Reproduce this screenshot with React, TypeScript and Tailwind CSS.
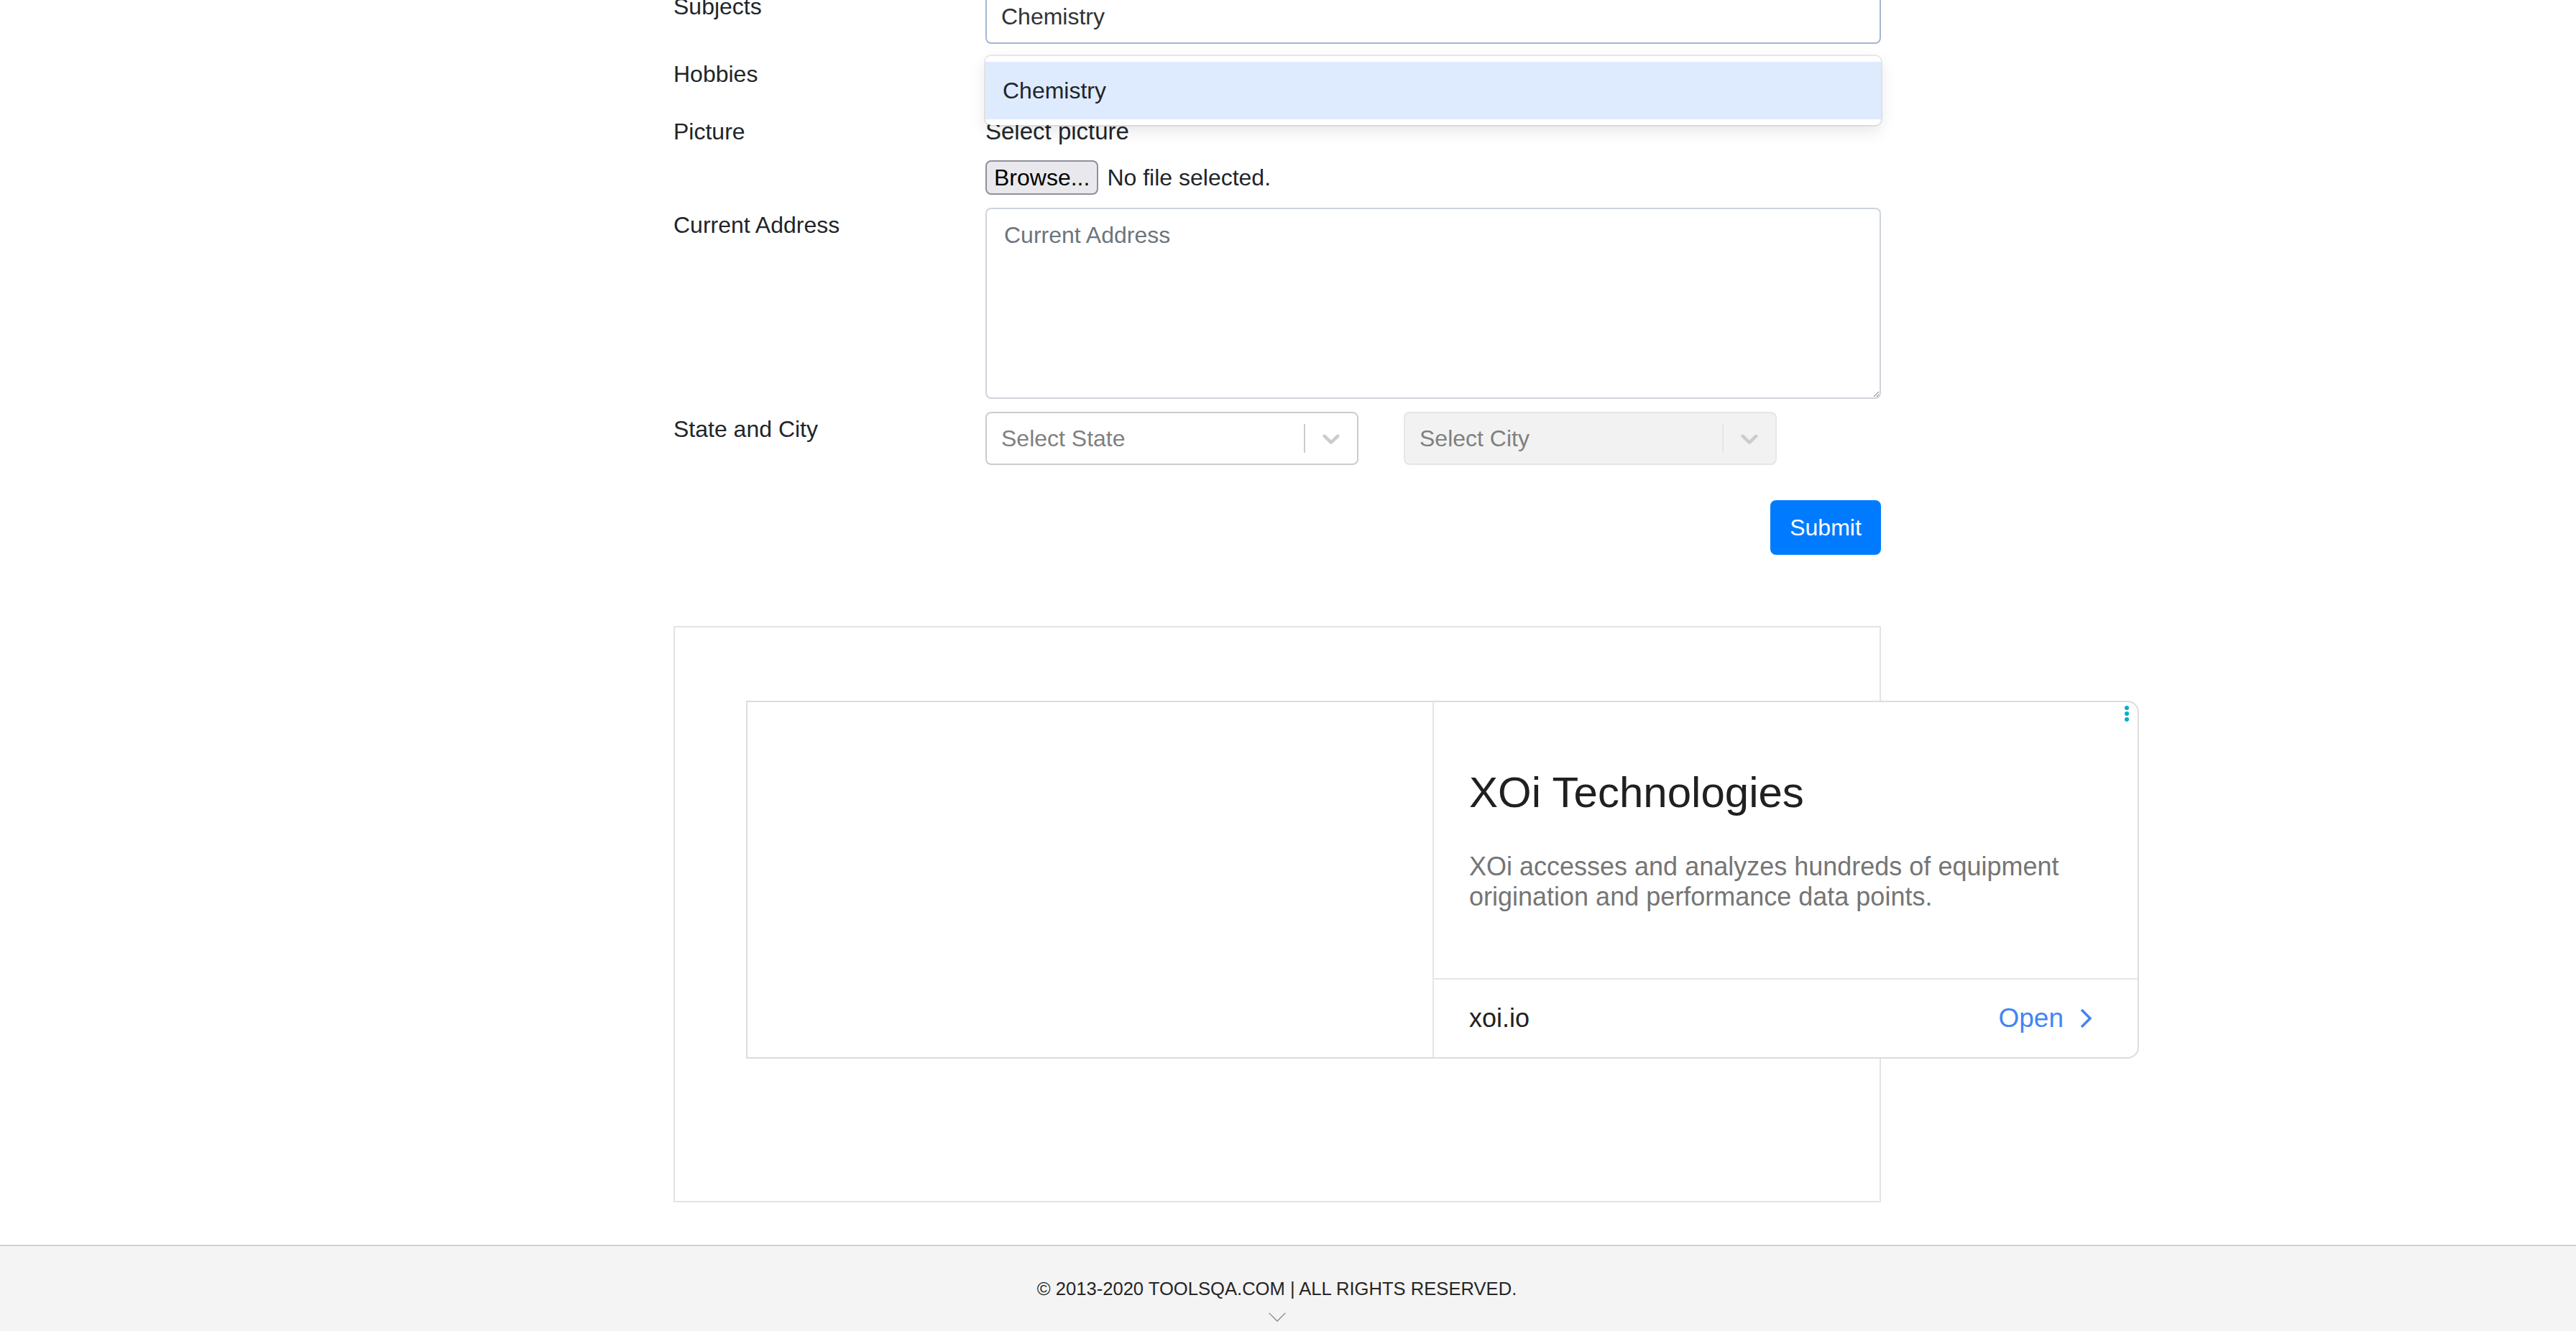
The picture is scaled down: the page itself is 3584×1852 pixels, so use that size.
import React from 'react';

const SELECT_CHEVRON =
  'M4.516 7.548c0.436-0.446 1.043-0.481 1.576 0l3.908 3.747 3.908-3.747c0.533-0.481 1.141-0.446 1.574 0 0.436 0.445 0.408 1.197 0 1.615-0.406 0.418-4.695 4.502-4.695 4.502-0.217 0.223-0.502 0.335-0.787 0.335s-0.57-0.112-0.789-0.335c0 0-4.287-4.084-4.695-4.502s-0.436-1.17 0-1.615z';

const Chevron = ({ className }: { className?: string }) => (
  <svg viewBox="0 0 20 20" className={className} fill="currentColor" aria-hidden="true">
    <path d={SELECT_CHEVRON} />
  </svg>
);

function SelectBox({ placeholder, disabled }: { placeholder: string; disabled?: boolean }) {
  return (
    <div
      className={`flex h-[74px] w-[519px] items-center rounded-[8px] border-2 ${
        disabled ? 'border-[#e6e6e6] bg-[#f2f2f2]' : 'border-[#cccccc] bg-white'
      }`}
    >
      <div className="flex-1 pl-[20px] text-[32px] text-[#808080]">{placeholder}</div>
      <span className={`h-[40px] w-[2px] ${disabled ? 'bg-[#e6e6e6]' : 'bg-[#cccccc]'}`} />
      <div className="px-[16px] text-[#cccccc]">
        <Chevron className="h-[40px] w-[40px]" />
      </div>
    </div>
  );
}

function Label({ children }: { children: React.ReactNode }) {
  return <div className="w-[434px] shrink-0 text-[32px] leading-[48px] text-[#212529]">{children}</div>;
}

export default function App() {
  return (
    <div className="min-h-screen overflow-hidden bg-white font-['Liberation_Sans',Arial,sans-serif] text-[#212529]">
      <div className="ml-[937px] w-[1680px] -mt-[15px]">
        {/* Subjects */}
        <div className="flex">
          <Label>Subjects</Label>
          <div className="relative h-[76px] w-[1246px] rounded-[8px] border-2 border-[#a3b7d3] bg-white">
            <div className="flex h-full items-center pl-[20px] text-[32px] text-[#333333]">Chemistry</div>
            <div className="absolute left-[-2px] right-[-2px] top-[91px] z-10 rounded-[8px] bg-white py-[8px] shadow-[0_0_0_2px_rgba(0,0,0,0.08),0_8px_22px_rgba(0,0,0,0.1)]">
              <div className="flex h-[80px] items-center bg-[#deebff] pl-[24px] text-[32px] text-[#212529]">
                Chemistry
              </div>
            </div>
          </div>
        </div>

        {/* Hobbies (checkboxes hidden under the open menu) */}
        <div className="mt-[18px] flex">
          <Label>Hobbies</Label>
          <div className="h-[48px] w-[1246px]" />
        </div>

        {/* Picture */}
        <div className="mt-[32px] flex">
          <Label>Picture</Label>
          <div className="w-[1246px] text-[32px]">
            <div className="leading-[48px] text-[33px]">Select picture</div>
            <div className="mt-[16px] flex h-[48px] items-center gap-[12px]">
              <button className="flex h-[48px] items-center rounded-[8px] border-2 border-[#8f8f9d] bg-[#e9e9ed] px-[10px] text-[32px] text-black">
                Browse...
              </button>
              <span>No file selected.</span>
            </div>
          </div>
        </div>

        {/* Current Address */}
        <div className="mt-[18px] flex">
          <Label>Current Address</Label>
          <textarea
            placeholder="Current Address"
            className="h-[266px] w-[1246px] rounded-[8px] border-2 border-[#ced4da] px-[24px] py-[12px] text-[32px] leading-[48px] text-[#495057] outline-none placeholder:text-[#6c757d]"
          />
        </div>

        {/* State and City */}
        <div className="mt-[18px] flex">
          <Label>State and City</Label>
          <div className="flex w-[1246px] gap-[63px]">
            <SelectBox placeholder="Select State" />
            <SelectBox placeholder="Select City" disabled />
          </div>
        </div>

        {/* Submit */}
        <div className="mt-[49px] flex justify-end">
          <button className="h-[76px] w-[154px] rounded-[8px] bg-[#007bff] text-[32px] text-white">Submit</button>
        </div>

        {/* Ad slot */}
        <div className="mt-[99px] h-[802px] w-[1680px] border-2 border-[#e3e3e3] pl-[99px] pt-[102px]">
          <div className="relative flex h-[498px] w-[1938px] rounded-r-[16px] border-2 border-[#dcdcdc] bg-white">
            <div className="w-[955px] shrink-0 border-r-2 border-[#e6e6e6]" />
            <div className="flex flex-1 flex-col">
              <div className="h-[384px] pl-[49px] pt-[94px]">
                <div className="text-[60px] leading-[64px] text-[#202020]">XOi Technologies</div>
                <div className="mt-[50px] w-[880px] text-[36px] leading-[42px] text-[#757575]">
                  XOi accesses and analyzes hundreds of equipment origination and performance data points.
                </div>
              </div>
              <div className="flex flex-1 items-center justify-between border-t-2 border-[#e6e6e6] pl-[49px] pr-[63px]">
                <span className="text-[36px] text-[#222222]">xoi.io</span>
                <span className="flex items-center gap-[22px] text-[37px] text-[#4285f4]">
                  Open
                  <svg viewBox="0 0 12 20" className="h-[30px] w-[18px]" fill="none" stroke="currentColor" strokeWidth="2.4">
                    <path d="M2 2l8 8-8 8" />
                  </svg>
                </span>
              </div>
            </div>
            <div className="absolute right-[12px] top-[5px] flex flex-col gap-[2px]">
              <span className="h-[6px] w-[6px] rounded-full bg-[#00aecd]" />
              <span className="h-[6px] w-[6px] rounded-full bg-[#00aecd]" />
              <span className="h-[6px] w-[6px] rounded-full bg-[#00aecd]" />
            </div>
          </div>
        </div>
      </div>

      {/* Footer */}
      <footer className="mt-[59px] flex h-[120px] flex-col items-center border-t-2 border-[#d2d2d2] bg-[#f4f4f4] pr-[31px] pt-[41px]">
        <div className="text-[25.6px] leading-[36px] text-[#262626]">© 2013-2020 TOOLSQA.COM | ALL RIGHTS RESERVED.</div>
        <svg viewBox="0 0 28 16" className="mt-[15px] h-[14px] w-[26px]" fill="none" stroke="#8a8a8a" strokeWidth="1.6">
          <path d="M1 1l13 13L27 1" />
        </svg>
      </footer>
    </div>
  );
}
